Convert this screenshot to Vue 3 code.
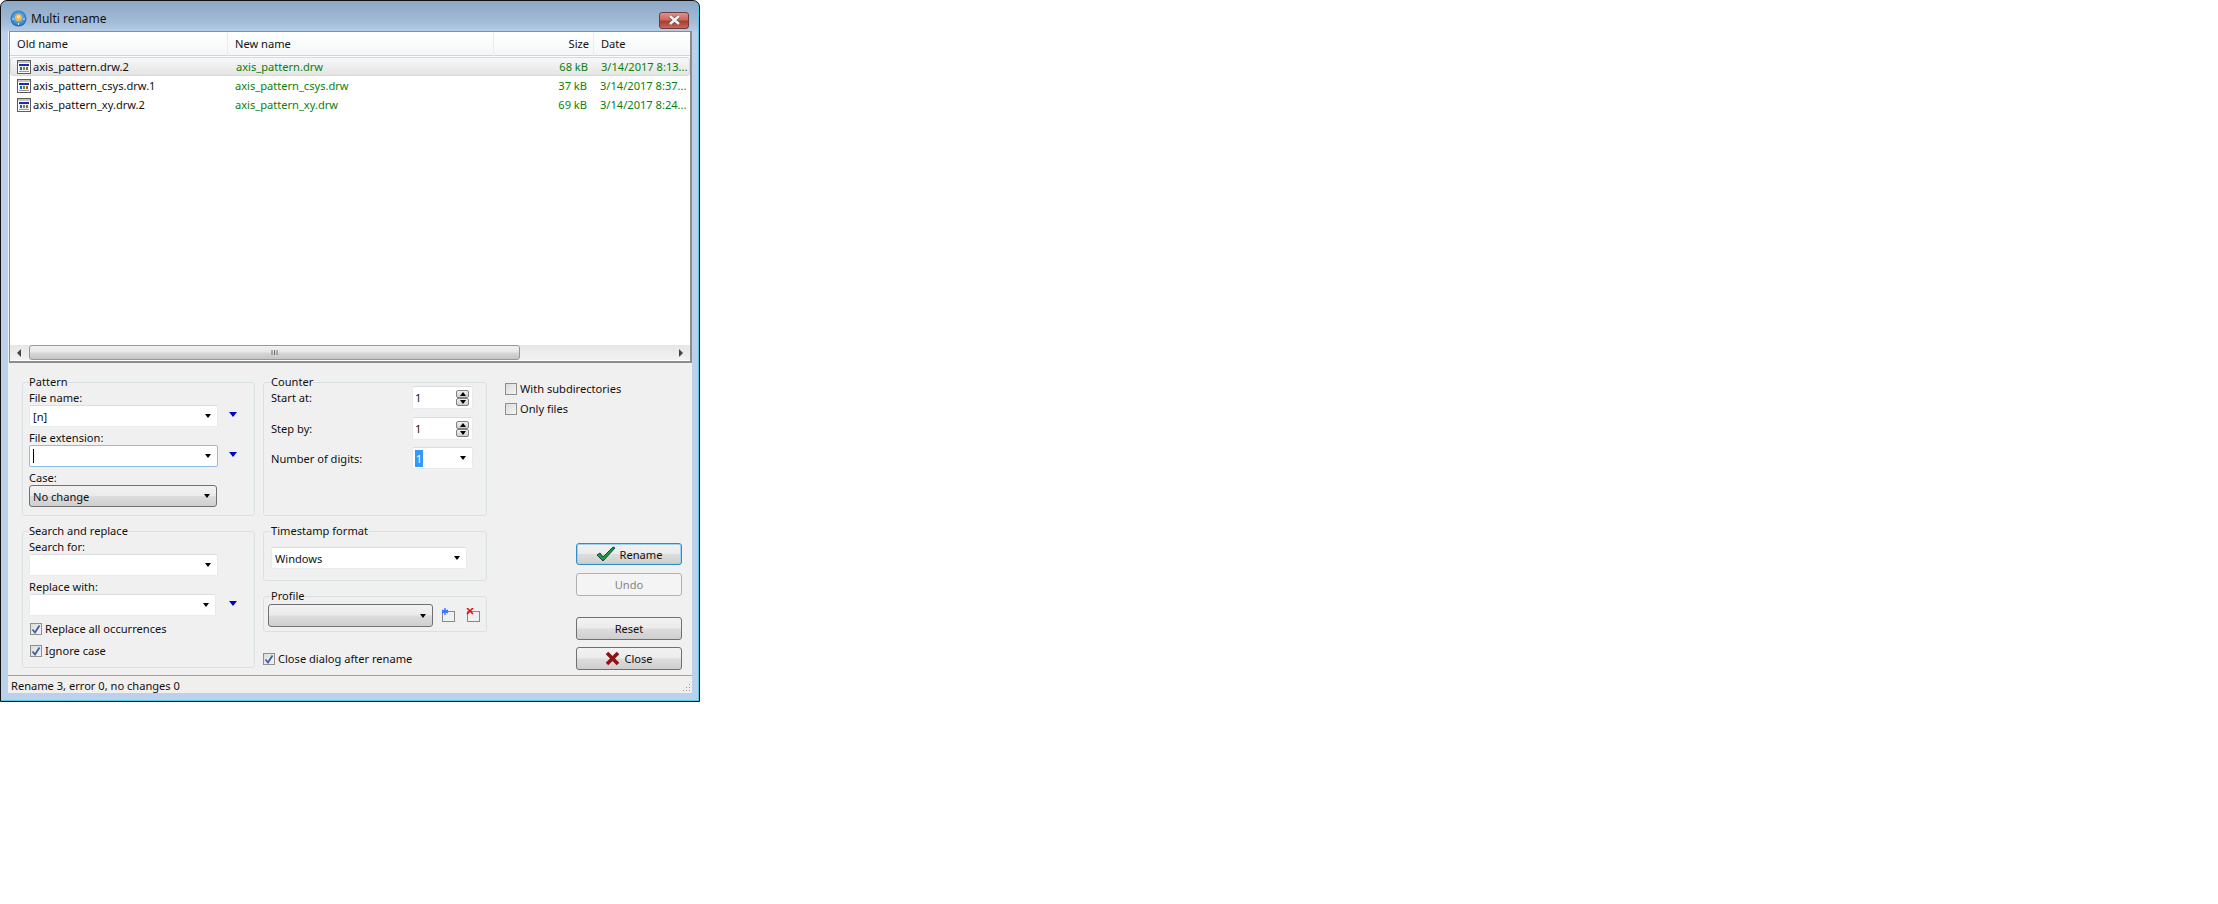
<script setup>
const files = [
  { oldName: "axis_pattern.drw.2", newName: "axis_pattern.drw", size: "68 kB", date: "3/14/2017 8:13..." },
  { oldName: "axis_pattern_csys.drw.1", newName: "axis_pattern_csys.drw", size: "37 kB", date: "3/14/2017 8:37..." },
  { oldName: "axis_pattern_xy.drw.2", newName: "axis_pattern_xy.drw", size: "69 kB", date: "3/14/2017 8:24..." },
];
</script>

<template>
  <div class="window">
    <div class="titlebar">
      <svg class="app-icon" width="17" height="17" viewBox="0 0 17 17">
        <defs>
          <radialGradient id="globe" cx="50%" cy="45%" r="55%">
            <stop offset="0" stop-color="#9cc8ef" />
            <stop offset="0.7" stop-color="#3f8fd6" />
            <stop offset="1" stop-color="#1f5fa8" />
          </radialGradient>
        </defs>
        <circle cx="8.5" cy="8.5" r="8" fill="url(#globe)" />
        <circle cx="8.5" cy="7.5" r="3.6" fill="#f2b54a" />
        <circle cx="8.5" cy="7" r="1.8" fill="#fbe3a6" />
        <path d="M2 9h2M13 9h2M8.500 13v2" stroke="#d6e9fa" stroke-width="1" />
      </svg>
      <span class="title">Multi rename</span>
      <div class="close-x">
        <svg width="15" height="10" viewBox="0 0 15 10">
          <path d="M3 1l9 8M12 1L3 9" fill="none" stroke="#5a4a4a" stroke-width="3.800" />
          <path d="M3 1l9 8M12 1L3 9" fill="none" stroke="#f2f2f2" stroke-width="2.600" />
        </svg>
      </div>
    </div>

    <div class="client">
      <div class="list">
        <div class="list-head">
          <span class="head-cell">Old name</span>
          <span class="head-cell">New name</span>
          <span class="head-cell head-size">Size</span>
          <span class="head-cell head-date">Date</span>
        </div>
        <div v-for="(f, i) in files" :key="f.oldName" class="row" :class="{ selected: i === 0 }">
          <span class="cell-old">
            <svg class="file-icon" width="14" height="14" viewBox="0 0 14 14">
              <rect x="0.500" y="0.500" width="13" height="13" fill="#fff" stroke="#5c5c5c" />
              <rect x="1" y="1" width="12" height="2" fill="#c4c4c4" />
              <rect x="2" y="4" width="10" height="2" fill="#1c2f9c" />
              <rect x="2" y="6" width="10" height="5" fill="#eef1f6" />
              <rect x="3" y="7" width="2" height="3" fill="#2f55c8" />
              <rect x="6" y="7" width="2" height="3" fill="#49a04a" />
              <rect x="9" y="7" width="2" height="3" fill="#c84a3a" />
              <rect x="2" y="11" width="10" height="1" fill="#9a9a9a" />
            </svg>
            {{ f.oldName }}
          </span>
          <span class="cell-new">{{ f.newName }}</span>
          <span class="cell-size">{{ f.size }}</span>
          <span class="cell-date">{{ f.date }}</span>
        </div>

        <div class="hscroll">
          <svg class="scroll-arrow" width="6" height="8" viewBox="0 0 6 8"><path d="M5 0v8L1 4z" fill="#444" /></svg>
          <div class="thumb">
            <svg width="8" height="5" viewBox="0 0 8 5"><path d="M1 0v5M3.500 0v5M6 0v5" stroke="#6e6e6e" /></svg>
          </div>
          <svg class="scroll-arrow right" width="6" height="8" viewBox="0 0 6 8"><path d="M1 0v8l4-4z" fill="#444" /></svg>
        </div>
      </div>

      <div class="panel">
        <div class="col-left">
          <fieldset class="group pattern">
            <legend>Pattern</legend>
            <div class="label">File name:</div>
            <div class="combo-line">
              <div class="combo w189"><span class="val">[n]</span><i class="arrow"></i></div>
              <i class="blue-arrow"></i>
            </div>
            <div class="label gap">File extension:</div>
            <div class="combo-line">
              <div class="combo w189 focused"><span class="caret"></span><i class="arrow"></i></div>
              <i class="blue-arrow"></i>
            </div>
            <div class="label gap">Case:</div>
            <div class="btn-combo case"><span class="val">No change</span><i class="arrow"></i></div>
          </fieldset>

          <fieldset class="group search">
            <legend>Search and replace</legend>
            <div class="label">Search for:</div>
            <div class="combo-line">
              <div class="combo w189"><i class="arrow"></i></div>
            </div>
            <div class="label gap">Replace with:</div>
            <div class="combo-line">
              <div class="combo w187"><i class="arrow"></i></div>
              <i class="blue-arrow wide"></i>
            </div>
            <label class="check first">
              <span class="box"><svg width="10" height="10" viewBox="0 0 10 10"><path d="M1.500 5.500l2.500 3 4.500-7" fill="none" stroke="#3f5f9f" stroke-width="1.800" /></svg></span>
              Replace all occurrences
            </label>
            <label class="check second">
              <span class="box"><svg width="10" height="10" viewBox="0 0 10 10"><path d="M1.500 5.500l2.500 3 4.500-7" fill="none" stroke="#3f5f9f" stroke-width="1.800" /></svg></span>
              Ignore case
            </label>
          </fieldset>
        </div>

        <div class="col-mid">
          <fieldset class="group counter">
            <legend>Counter</legend>
            <div class="counter-row first">
              <span>Start at:</span>
              <div class="spin">
                <span class="spin-val">1</span>
                <div class="spin-btns"><b class="up"></b><b class="down"></b></div>
              </div>
            </div>
            <div class="counter-row second">
              <span>Step by:</span>
              <div class="spin">
                <span class="spin-val">1</span>
                <div class="spin-btns"><b class="up"></b><b class="down"></b></div>
              </div>
            </div>
            <div class="counter-row third">
              <span>Number of digits:</span>
              <div class="combo digits"><span class="sel">1</span><i class="arrow"></i></div>
            </div>
          </fieldset>

          <fieldset class="group timestamp">
            <legend>Timestamp format</legend>
            <div class="combo stamp"><span class="val">Windows</span><i class="arrow"></i></div>
          </fieldset>

          <fieldset class="group profile">
            <legend>Profile</legend>
            <div class="profile-line">
              <div class="btn-combo prof"><i class="arrow"></i></div>
              <svg class="prof-icon" width="15" height="15" viewBox="0 0 15 15">
                <rect x="1.500" y="3.500" width="12" height="10" fill="none" stroke="#222" stroke-dasharray="1 1" />
                <path d="M4 0v7M1 2l6 3M7 2L1 5" stroke="#1f6bff" stroke-width="1.300" />
              </svg>
              <svg class="prof-icon second" width="15" height="15" viewBox="0 0 15 15">
                <rect x="1.500" y="3.500" width="12" height="10" fill="none" stroke="#222" stroke-dasharray="1 1" />
                <path d="M1 0l6 6M7 0L1 6" stroke="#e01010" stroke-width="1.600" />
              </svg>
            </div>
          </fieldset>

          <label class="check close-after">
            <span class="box"><svg width="10" height="10" viewBox="0 0 10 10"><path d="M1.500 5.500l2.500 3 4.500-7" fill="none" stroke="#3f5f9f" stroke-width="1.800" /></svg></span>
            Close dialog after rename
          </label>
        </div>

        <div class="col-right">
          <label class="check with-sub"><span class="box"></span>With subdirectories</label>
          <label class="check only-files"><span class="box"></span>Only files</label>

          <button class="btn default rename">
            <svg width="20" height="16" viewBox="0 0 20 16">
              <path d="M1 9l3-2 3 4L17 1l2 1L7 15z" fill="#1f9d2a" stroke="#123f63" stroke-width="1" />
            </svg>
            Rename
          </button>
          <button class="btn disabled undo">Undo</button>
          <button class="btn reset">Reset</button>
          <button class="btn close-btn">
            <svg width="15" height="15" viewBox="0 0 15 15">
              <path d="M2 2l11 11M13 2L2 13" stroke="#8c1414" stroke-width="3.600" />
            </svg>
            Close
          </button>
        </div>
      </div>

      <div class="status">
        <span>Rename 3, error 0, no changes 0</span>
        <svg class="grip" width="8" height="8" viewBox="0 0 8 8">
          <path d="M6 0h1v1H6zM3 3h1v1H3zM6 3h1v1H6zM0 6h1v1H0zM3 6h1v1H3zM6 6h1v1H6z" fill="#9a9a9a" />
        </svg>
      </div>
    </div>
  </div>
</template>

<style>
html,
body {
  margin: 0;
  background: #fff;
}
</style>

<style scoped>
.window {
  box-sizing: border-box;
  width: 700px;
  height: 702px;
  display: flex;
  flex-direction: column;
  padding: 0 7px 8px;
  border: 1px solid #111;
  border-radius: 7px 7px 0 0;
  background: linear-gradient(to bottom, #8ea8c5 0, #a3bcd8 22px, #b9d1ea 32px);
  box-shadow: inset -1px -1px 0 #5cc6ea;
  font-family: "Noto Sans", sans-serif;
  font-size: 11.1px;
  color: #111;
}

.titlebar {
  flex: none;
  height: 30px;
  display: flex;
  align-items: center;
}

.app-icon {
  margin: 4px 0 0 2px;
}

.title {
  margin: 4px 0 0 4px;
  font-size: 12px;
}

.close-x {
  box-sizing: border-box;
  width: 30px;
  height: 17px;
  margin: 8px 3px 0 auto;
  display: flex;
  align-items: center;
  justify-content: center;
  border: 1px solid #6e3a3a;
  border-radius: 3px;
  background: linear-gradient(to bottom, #d9938a 0, #c9695e 45%, #b03a2c 55%, #c4685c 100%);
}

.client {
  flex: 1;
  min-height: 0;
  display: flex;
  flex-direction: column;
  background: #f0f0f0;
}

.list {
  flex: none;
  box-sizing: border-box;
  height: 332px;
  margin-left: 1px;
  display: flex;
  flex-direction: column;
  background: #fff;
  border: 1px solid #8d8d8d;
  border-right-width: 2px;
  border-bottom-width: 2px;
}

.list-head {
  flex: none;
  height: 24px;
  box-sizing: border-box;
  display: grid;
  grid-template-columns: 218px 266px 100px 1fr;
  align-items: stretch;
  background: linear-gradient(to bottom, #fff, #f4f7f9);
  border-bottom: 1px solid #d5d5d5;
}

.head-cell {
  padding: 0 4px 0 7px;
  line-height: 24px;
  border-right: 1px solid #e8ecef;
}

.head-size {
  text-align: right;
}

.head-date {
  padding-left: 7px;
  border-right: none;
}

.row {
  flex: none;
  box-sizing: border-box;
  height: 19px;
  display: grid;
  grid-template-columns: 218px 266px 100px 1fr;
  align-items: center;
  line-height: 17px;
  white-space: nowrap;
}

.row.selected {
  margin-top: 1px;
  border: 1px solid #d8d8d8;
  border-radius: 3px;
  background: linear-gradient(to bottom, #f8f8f8, #e4e4e4);
}

.cell-old {
  display: flex;
  align-items: center;
  padding-left: 7px;
}

.row.selected .cell-old {
  padding-left: 6px;
}

.file-icon {
  margin-right: 2px;
}

.cell-new {
  padding-left: 7px;
  color: #0b7f0b;
}

.cell-size {
  padding-right: 7px;
  text-align: right;
  color: #0b7f0b;
}

.cell-date {
  padding-left: 6px;
  color: #0b7f0b;
}

.hscroll {
  flex: none;
  height: 15px;
  margin: auto 0 1px;
  display: flex;
  align-items: center;
  background: linear-gradient(to bottom, #e6e6e6, #f2f2f2);
}

.scroll-arrow {
  margin-left: 6px;
}

.scroll-arrow.right {
  margin-left: auto;
  margin-right: 6px;
}

.thumb {
  box-sizing: border-box;
  width: 491px;
  height: 15px;
  margin-left: 7px;
  display: flex;
  align-items: center;
  justify-content: center;
  border: 1px solid #979797;
  border-radius: 3px;
  background: linear-gradient(to bottom, #f2f2f2 0, #e6e6e6 45%, #d6d6d6 55%, #c4c4c4 100%);
}

.panel {
  flex: 1;
  min-height: 0;
  display: flex;
  padding: 11px 0 0 14px;
}

.col-left {
  flex: none;
  width: 233px;
}

.col-mid {
  flex: none;
  width: 224px;
  margin-left: 8px;
}

.col-right {
  flex: none;
  width: 177px;
  margin-left: 18px;
  display: flex;
  flex-direction: column;
  padding-bottom: 5px;
  box-sizing: border-box;
}

.group {
  box-sizing: border-box;
  min-width: 0;
  margin: 0;
  padding: 0 7px;
  border: 1px solid #d9e0e4;
  border-radius: 3px;
}

.col-left .group {
  padding-left: 6px;
}

.group legend {
  height: 16px;
  padding: 0;
  line-height: 16px;
}

.pattern,
.counter {
  height: 142px;
}

.search {
  height: 145px;
  margin-top: 7px;
}

.timestamp {
  height: 58px;
  margin-top: 7px;
}

.profile {
  height: 44px;
  margin-top: 7px;
}

.label {
  height: 15px;
  line-height: 15px;
}

.label.gap {
  margin-top: 3px;
}

.combo-line {
  display: flex;
  align-items: center;
}

.combo {
  flex: none;
  box-sizing: border-box;
  height: 22px;
  display: flex;
  align-items: center;
  padding: 0 6px 0 3px;
  background: #fff;
  border: 1px solid #e6ebf0;
  border-top-color: #d9dce0;
  border-radius: 2px;
}

.combo.focused {
  border-color: #8cbce8;
}

.w189 {
  width: 189px;
}

.w187 {
  width: 187px;
}

.val {
  white-space: nowrap;
}

.caret {
  width: 1px;
  height: 14px;
  margin-left: 0;
  background: #000;
}

.arrow {
  width: 0;
  height: 0;
  margin-left: auto;
  border-top: 4px solid #000;
  border-left: 3.5px solid transparent;
  border-right: 3.5px solid transparent;
}

.blue-arrow {
  width: 0;
  height: 0;
  margin: -3px 0 0 11px;
  border-top: 5px solid #0000cc;
  border-left: 4.5px solid transparent;
  border-right: 4.5px solid transparent;
}

.blue-arrow.wide {
  margin-left: 13px;
}

.btn-combo {
  flex: none;
  box-sizing: border-box;
  display: flex;
  align-items: center;
  padding: 0 6px 0 3px;
  border: 1px solid #707070;
  border-radius: 3px;
  background: linear-gradient(to bottom, #f2f2f2 0, #ebebeb 48%, #dcdcdc 52%, #cfcfcf 100%);
}

.case {
  width: 188px;
  height: 22px;
}

.prof {
  width: 165px;
  height: 23px;
  margin-left: -3px;
}

.profile-line {
  display: flex;
  align-items: center;
}

.prof-icon {
  flex: none;
  margin: 0 0 0 8px;
}

.prof-icon.second {
  margin-left: 10px;
}

.check {
  display: flex;
  align-items: center;
  height: 14px;
  line-height: 14px;
  white-space: nowrap;
}

.check .box {
  box-sizing: border-box;
  flex: none;
  width: 12px;
  height: 12px;
  margin-right: 3px;
  display: flex;
  align-items: center;
  justify-content: center;
  border: 1px solid #8e8f8f;
  background: linear-gradient(135deg, #dcdcdc, #f4f4f4);
}

.check.first {
  margin: 6px 0 0 1px;
}

.check.second {
  margin: 8px 0 0 1px;
}

.check.close-after {
  margin-top: 20px;
}

.check.with-sub {
  margin-top: 8px;
}

.check.only-files {
  margin-top: 6px;
}

.counter {
  padding-right: 13px;
}

.counter-row {
  display: flex;
  align-items: center;
  justify-content: space-between;
}

.counter-row.first {
  margin-top: -4px;
}

.counter-row.second {
  margin-top: 8px;
}

.counter-row.third {
  margin-top: 7px;
}

.spin {
  box-sizing: border-box;
  width: 61px;
  height: 23px;
  display: flex;
  align-items: center;
  padding: 0 3px 0 2px;
  background: #fff;
  border: 1px solid #e6ebf0;
  border-top-color: #d9dce0;
  border-radius: 2px;
}

.spin-val {
  line-height: 14px;
}

.spin-btns {
  margin-left: auto;
  width: 13px;
  display: flex;
  flex-direction: column;
}

.spin-btns b {
  box-sizing: border-box;
  height: 8px;
  display: flex;
  align-items: center;
  justify-content: center;
  border: 1px solid #808080;
  border-radius: 2px;
  background: linear-gradient(to bottom, #f0f0f0, #cfcfcf);
}

.spin-btns .up::after,
.spin-btns .down::after {
  content: "";
  width: 0;
  height: 0;
  border-left: 3.5px solid transparent;
  border-right: 3.5px solid transparent;
}

.spin-btns .up::after {
  border-bottom: 4px solid #000;
}

.spin-btns .down::after {
  border-top: 4px solid #000;
}

.digits {
  width: 61px;
  padding-left: 2px;
}

.sel {
  width: 8px;
  height: 17px;
  line-height: 17px;
  text-align: center;
  background: #3399ff;
  color: #fff;
}

.stamp {
  width: 196px;
  margin-top: 8px;
}

.btn {
  box-sizing: border-box;
  width: 106px;
  height: 23px;
  align-self: flex-end;
  display: flex;
  align-items: center;
  justify-content: center;
  gap: 4px;
  padding: 0;
  font: inherit;
  color: #111;
  border: 1px solid #707070;
  border-radius: 3px;
  background: linear-gradient(to bottom, #f2f2f2 0, #ebebeb 48%, #dcdcdc 52%, #cfcfcf 100%);
}

.btn.default {
  border-color: #2f8fc4;
  box-shadow: inset 0 0 0 1px #9bd3f0;
}

.btn.disabled {
  color: #838383;
  border-color: #adb2b5;
  background: #f4f4f4;
}

.rename {
  height: 22px;
  margin-top: auto;
}

.undo {
  margin-top: 8px;
}

.reset {
  margin-top: 21px;
}

.close-btn {
  margin-top: 7px;
}

.status {
  flex: none;
  box-sizing: border-box;
  height: 18px;
  display: flex;
  align-items: center;
  padding: 2px 1px 0 3px;
  border-top: 1px solid #a0a0a0;
  background: #f1eeee;
  line-height: 15px;
}

.grip {
  margin: 4px 0 0 auto;
}
</style>
